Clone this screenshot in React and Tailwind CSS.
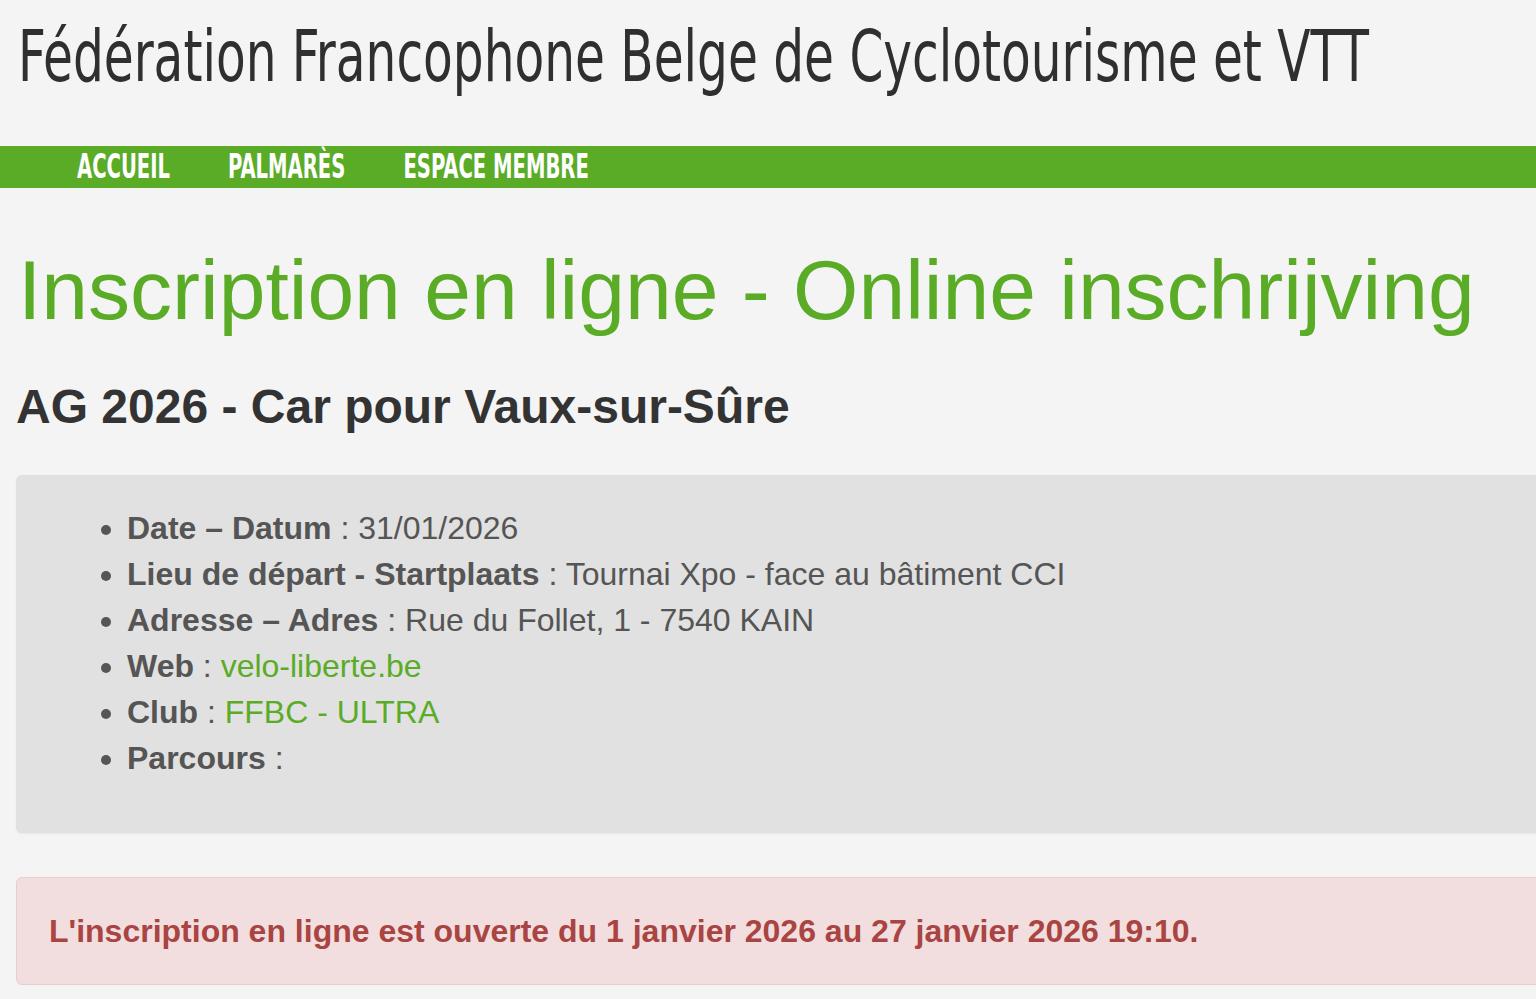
export default function App() {
  const items = [
    { label: "Date – Datum", value: "31/01/2026" },
    { label: "Lieu de départ - Startplaats", value: "Tournai Xpo - face au bâtiment CCI" },
    { label: "Adresse – Adres", value: "Rue du Follet, 1 - 7540 KAIN" },
    { label: "Web", value: "velo-liberte.be", link: true },
    { label: "Club", value: "FFBC - ULTRA", link: true },
    { label: "Parcours", value: "" },
  ];

  return (
    <div className="min-h-screen w-full overflow-hidden bg-[#f4f4f4] font-['Liberation_Sans',Arial,sans-serif] text-[#333]">
      <header className="pl-[18px] pt-[14px] h-[146px]">
        <div className="inline-block origin-left scale-x-[0.75] whitespace-nowrap font-['DejaVu_Sans_Condensed','DejaVu_Sans',sans-serif] text-[72px] leading-[84px] text-[#2f2f2f]">
          Fédération Francophone Belge de Cyclotourisme et VTT
        </div>
      </header>

      <nav className="h-[42px] bg-[#5aac27] pl-[77px] flex items-center">
        <ul className="flex origin-left scale-x-[0.66] gap-[88px] whitespace-nowrap font-['DejaVu_Sans_Condensed','DejaVu_Sans',sans-serif] text-[33px] font-bold leading-[42px] text-white">
          <li>ACCUEIL</li>
          <li>PALMARÈS</li>
          <li>ESPACE MEMBRE</li>
        </ul>
      </nav>

      <main className="pl-[16px]">
        <h1 className="mt-[56px] pl-[2px] text-[84px] leading-[1.1] text-[#5aac27] whitespace-nowrap">
          Inscription en ligne - Online inschrijving
        </h1>
        <h3 className="mt-[45px] text-[48px] font-bold leading-[1.1] whitespace-nowrap">
          AG 2026 - Car pour Vaux-sur-Sûre
        </h3>

        <div className="mt-[41px] w-[1560px] rounded-[6px] bg-[#e1e1e1] pt-[30px] pb-[52px] pl-[38px] shadow-[0_1px_2px_rgba(0,0,0,0.06)]">
          <ul className="list-disc pl-[73px] text-[32px] leading-[46px] text-[#555]">
            {items.map((it) => (
              <li key={it.label}>
                <strong>{it.label}</strong> :{" "}
                {it.link ? (
                  <a className="text-[#5aac27]">{it.value}</a>
                ) : (
                  it.value
                )}
              </li>
            ))}
          </ul>
        </div>

        <div className="mt-[44px] mb-[20px] w-[1560px] rounded-[6px] border border-[#ebccd1] bg-[#f2dede] py-[30px] pl-[32px] text-[32px] font-bold leading-[46px] text-[#a94442]">
          L'inscription en ligne est ouverte du 1 janvier 2026 au 27 janvier 2026 19:10.
        </div>
      </main>
    </div>
  );
}
